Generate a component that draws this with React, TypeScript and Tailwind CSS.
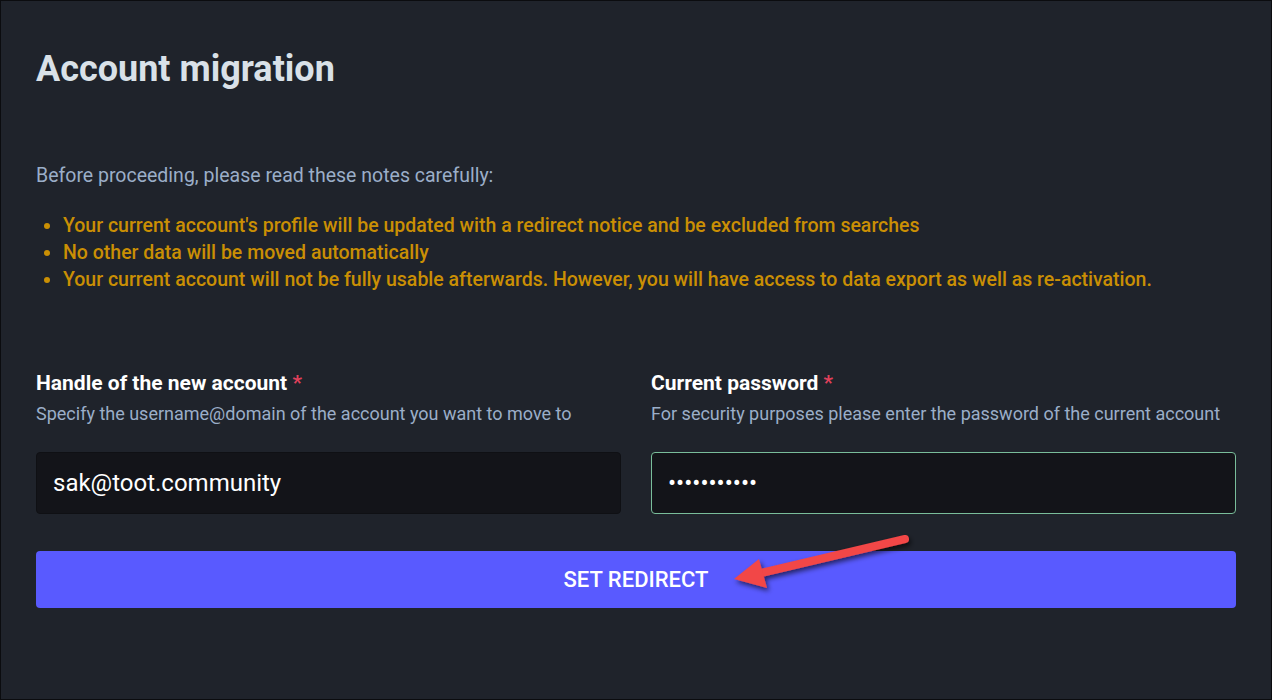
import React from "react";

export default function App() {
  return (
    <div className="w-[1272px] h-[700px] bg-[#1f232b] border border-[#0b0c0f] overflow-hidden relative" style={{ fontFamily: "Roboto, 'Liberation Sans', sans-serif" }}>
      <div className="pl-[35px] pr-[35px] pt-[47px]">
        <h1 className="text-[36px] leading-[42px] font-bold text-[#d9e1e8]">Account migration</h1>
        <p className="mt-[74px] text-[19.5px] leading-[24px] text-[#9baec8]">Before proceeding, please read these notes carefully:</p>
        <ul className="mt-[24px] list-disc pl-[27px] text-[19.5px] leading-[27px] font-medium text-[#ca8f04] marker:text-[#ca8f04]">
          <li>Your current account's profile will be updated with a redirect notice and be excluded from searches</li>
          <li>No other data will be moved automatically</li>
          <li>Your current account will not be fully usable afterwards. However, you will have access to data export as well as re-activation.</li>
        </ul>
        <div className="mt-[77px] grid grid-cols-2 gap-[30px]">
          <div>
            <label className="block text-[21px] leading-[26px] font-bold text-white">
              Handle of the new account <span className="text-[#df405a]">*</span>
            </label>
            <p className="mt-[6px] text-[18px] leading-[24px] text-[#9baec8]">Specify the username@domain of the account you want to move to</p>
            <div className="mt-[26px] h-[62px] rounded-[4px] bg-[#131419] border border-[#0f1014] flex items-center pl-[16px] text-[24px] text-white">
              sak@toot.community
            </div>
          </div>
          <div>
            <label className="block text-[21px] leading-[26px] font-bold text-white">
              Current password <span className="text-[#df405a]">*</span>
            </label>
            <p className="mt-[6px] text-[18px] leading-[24px] text-[#9baec8]">For security purposes please enter the password of the current account</p>
            <div className="mt-[26px] h-[62px] rounded-[4px] bg-[#131419] border border-[#79bd9a] flex items-center pl-[16px] text-[24px] text-white">
              •••••••••••
            </div>
          </div>
        </div>
        <button className="mt-[37px] w-full h-[57px] rounded-[4px] bg-[#595aff] text-white text-[22px] font-medium uppercase">
          Set redirect
        </button>
      </div>
      <svg className="absolute left-0 top-0 pointer-events-none" width="1272" height="700">
        <defs>
          <filter id="sh" x="-20%" y="-50%" width="140%" height="200%">
            <feDropShadow dx="2" dy="3" stdDeviation="2.5" floodColor="#000" floodOpacity="0.6" />
          </filter>
        </defs>
        <g filter="url(#sh)">
          <line x1="904" y1="538" x2="760" y2="572" stroke="#f24646" strokeWidth="8" strokeLinecap="round" />
          <polygon points="733,578 758,558 766,587" fill="#f24646" />
        </g>
      </svg>
    </div>
  );
}
